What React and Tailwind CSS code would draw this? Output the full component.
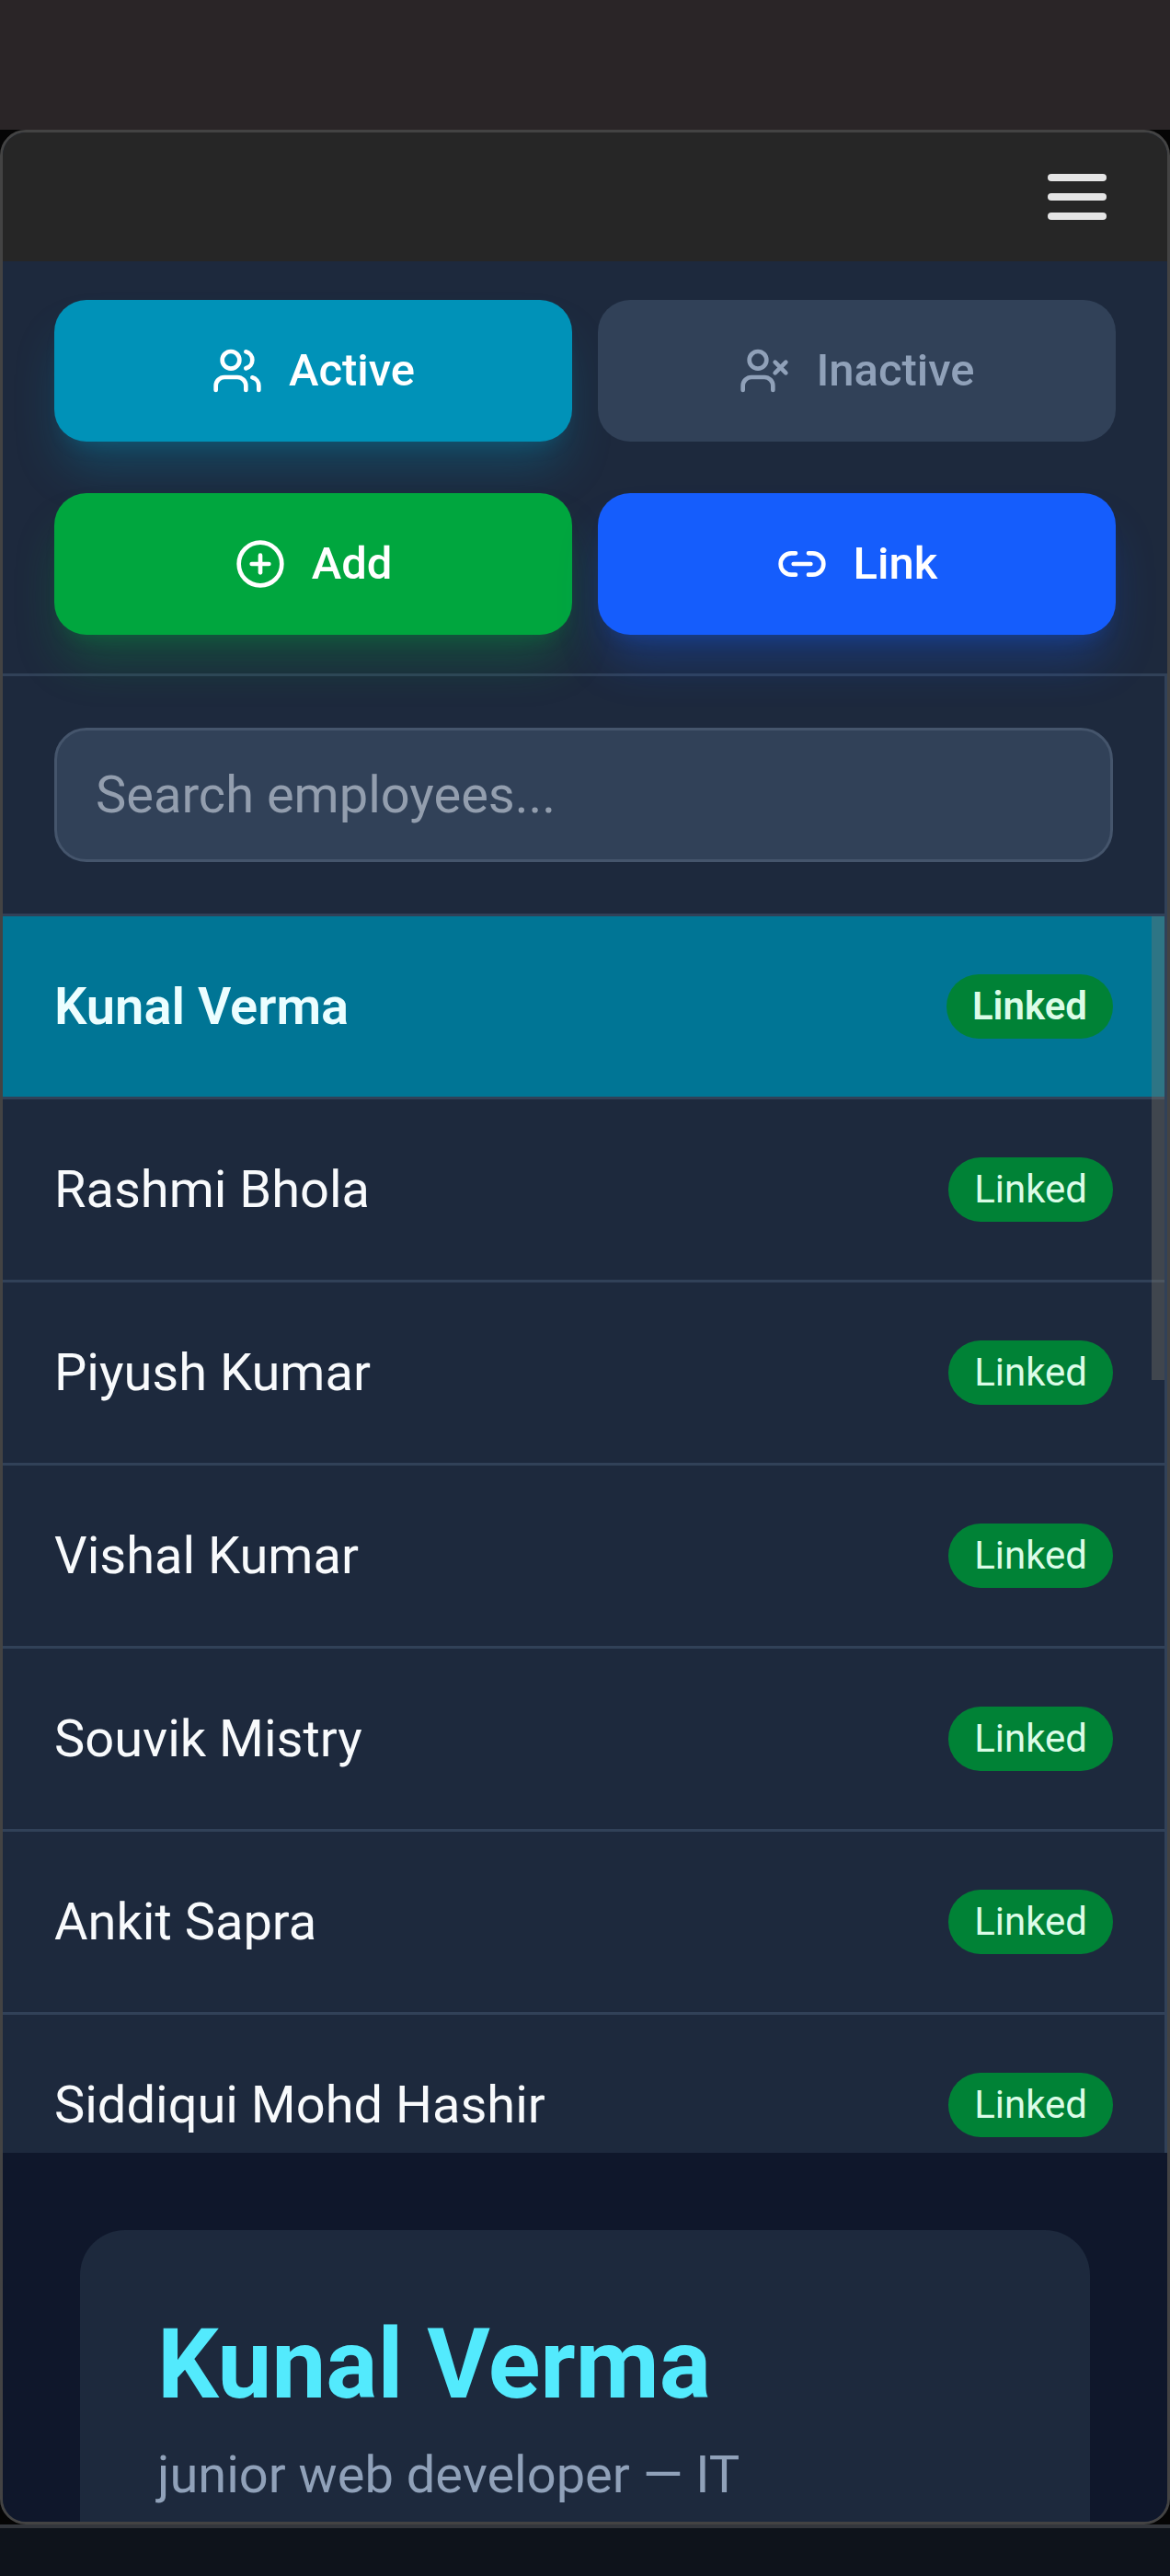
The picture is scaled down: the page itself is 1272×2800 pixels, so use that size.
import { Users, UserX, CirclePlus, Link2 } from "lucide-react";

const employees = [
  "Kunal Verma",
  "Rashmi Bhola",
  "Piyush Kumar",
  "Vishal Kumar",
  "Souvik Mistry",
  "Ankit Sapra",
  "Siddiqui Mohd Hashir",
];

const actions = [
  {
    label: "Active",
    Icon: Users,
    tone: "bg-cyan-600 text-white shadow-[0_35px_52px_-10px_rgba(0,146,184,0.3),0_14px_21px_-14px_rgba(0,146,184,0.3)]",
  },
  { label: "Inactive", Icon: UserX, tone: "bg-slate-700 text-slate-400" },
  {
    label: "Add",
    Icon: CirclePlus,
    tone: "bg-green-600 text-white shadow-[0_35px_52px_-10px_rgba(0,166,62,0.3),0_14px_21px_-14px_rgba(0,166,62,0.3)]",
  },
  {
    label: "Link",
    Icon: Link2,
    tone: "bg-blue-600 text-white shadow-[0_35px_52px_-10px_rgba(21,93,252,0.3),0_14px_21px_-14px_rgba(21,93,252,0.3)]",
  },
];

function Header() {
  return (
    <header className="flex h-[140px] shrink-0 items-center justify-end bg-[#262626] pr-[66px]">
      <button aria-label="Menu" className="flex w-16 flex-col gap-[13px]">
        <span className="h-2 rounded-full bg-neutral-200" />
        <span className="h-2 rounded-full bg-neutral-200" />
        <span className="h-2 rounded-full bg-neutral-200" />
      </button>
    </header>
  );
}

function Actions() {
  return (
    <div className="grid shrink-0 grid-cols-2 gap-x-7 gap-y-14 border-b-[3px] border-slate-700 px-14 py-[42px]">
      {actions.map(({ label, Icon, tone }) => (
        <button
          key={label}
          className={`flex h-[154px] items-center justify-center gap-7 rounded-[35px] text-[49px] leading-[70px] font-medium ${tone}`}
        >
          <Icon size={56} strokeWidth={2} />
          {label}
        </button>
      ))}
    </div>
  );
}

function EmployeeRow({ name, selected }) {
  return (
    <li
      className={`flex items-center justify-between border-b-[3px] border-slate-700 p-14 ${
        selected ? "bg-cyan-700 font-semibold text-cyan-50" : ""
      }`}
    >
      <span className="text-[56px] leading-[84px]">{name}</span>
      <span className="rounded-full bg-green-700 px-7 py-[7px] text-[42px] leading-[56px] text-green-100">
        Linked
      </span>
    </li>
  );
}

function Sidebar() {
  return (
    <aside className="-mt-[3px] flex h-[1608px] shrink-0 flex-col border-r-[3px] border-slate-700 pt-[3px]">
      <div className="shrink-0 border-b-[3px] border-slate-700 p-14">
        <input
          placeholder="Search employees..."
          className="block h-[146px] w-full rounded-[35px] border-[3px] border-slate-600 bg-slate-700 px-[42px] text-[56px] leading-[84px] placeholder:text-[#939eae]"
        />
      </div>
      <div className="relative min-h-0 flex-1 overflow-hidden">
        <ul>
          {employees.map((name, i) => (
            <EmployeeRow key={name} name={name} selected={i === 0} />
          ))}
        </ul>
        <div className="absolute top-0 right-0 h-[504px] w-3.5 bg-[rgba(120,118,108,0.38)]" />
      </div>
    </aside>
  );
}

function Details() {
  return (
    <main className="min-h-0 flex-1 bg-slate-900 px-[84px] pt-[84px]">
      <section className="h-[700px] rounded-[49px] bg-slate-800 p-[84px]">
        <h1 className="text-[105px] leading-[126px] font-bold text-cyan-300">Kunal Verma</h1>
        <p className="mt-3.5 text-[56px] leading-[84px] text-slate-400">junior web developer — IT</p>
      </section>
    </main>
  );
}

export default function App() {
  return (
    <div className="flex h-[2800px] w-[1272px] flex-col overflow-hidden bg-[#0e131b] font-['Roboto',sans-serif]">
      <div className="h-[141px] shrink-0 bg-[#2a2527]" />
      <div className="h-[2603px] shrink-0 bg-[#050505]">
        <div className="flex h-full flex-col overflow-hidden rounded-[28px] border-[3px] border-[#434343] bg-slate-800 text-slate-50">
          <Header />
          <Actions />
          <Sidebar />
          <Details />
        </div>
      </div>
      <div className="h-1 shrink-0 bg-[#33363c]" />
    </div>
  );
}
